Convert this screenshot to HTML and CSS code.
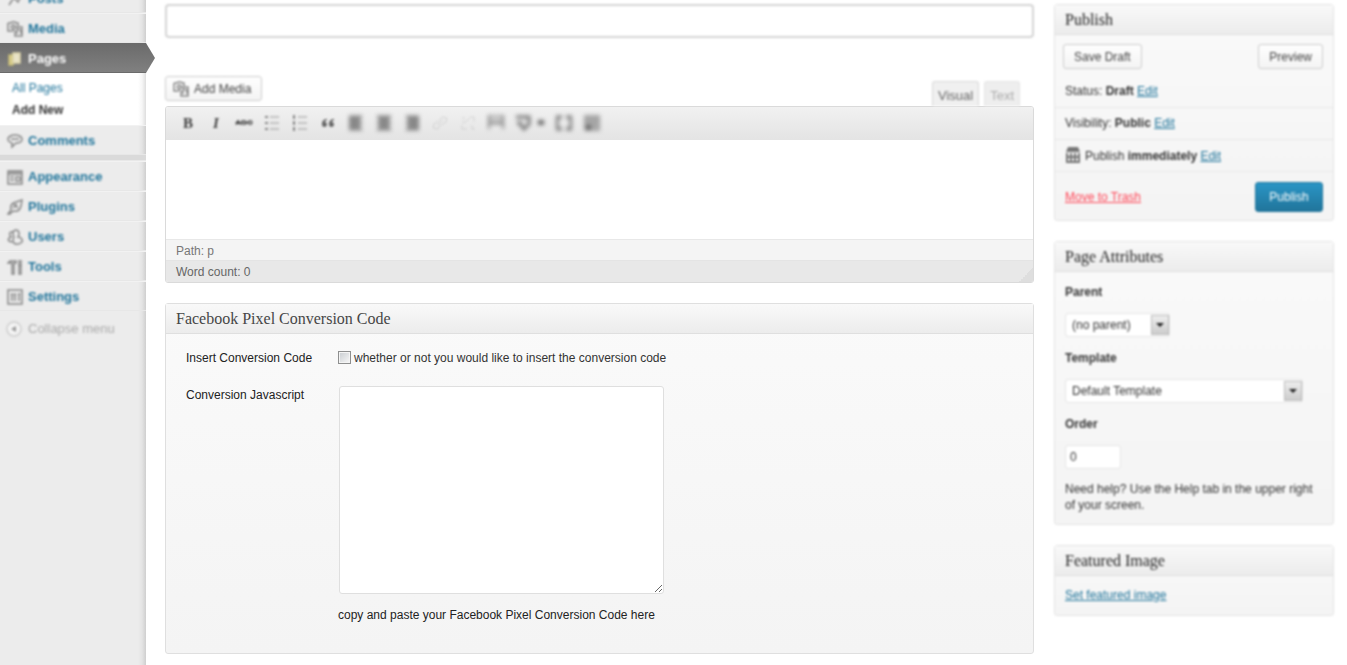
FILE: index.html
```html
<!DOCTYPE html>
<html lang="en">
<head>
<meta charset="utf-8">
<title>Add New Page</title>
<link rel="stylesheet" href="styles.css">
</head>
<body>
<div class="layout">
  <nav class="menu" aria-label="Main menu">
    <a class="item" href="#"><svg class="icon" viewBox="0 0 16 16"><path d="M10 1l5 5-2 1-2 4-6-6 4-2zM6 8l-4 6" /></svg><span>Posts</span></a>
    <a class="item" href="#"><svg class="icon" viewBox="0 0 16 16"><path d="M1 2h3l1-1h3l1 1h2v3M1 2v8h5M8 5a2 2 0 1 0-2 3M7 6h8v9H8v-5M7 6v4M10 13V8l4 1v4" /></svg><span>Media</span></a>
    <a class="item current" href="#"><svg class="icon" viewBox="0 0 16 16"><path class="page-back" d="M2 4h4v10H2z"/><path class="page-front" d="M6 2h7v10H6z"/></svg><span>Pages</span></a>
    <div class="submenu">
      <a href="#">All Pages</a>
      <a class="active" href="#">Add New</a>
    </div>
    <a class="item" href="#"><svg class="icon" viewBox="0 0 16 16"><path d="M8 2c4 0 7 2 7 4s-2 4-6 4l-4 4v-4C2 9 1 8 1 6c0-2 3-4 7-4zM4 6h8" /></svg><span>Comments</span></a>
    <div class="separator"></div>
    <a class="item" href="#"><svg class="icon" viewBox="0 0 16 16"><path d="M1 2h14v13H1zM1 5h14M3 8h4M3 11h4M9 8h4v4H9z"/><path d="M2 3h12" /></svg><span>Appearance</span></a>
    <a class="item" href="#"><svg class="icon" viewBox="0 0 16 16"><path d="M1 15l3-4c-1-4 1-7 5-8l6-2-1 6c-1 4-4 6-8 5l-3 3zM7 5l4 4M6 9l4-4" /></svg><span>Plugins</span></a>
    <a class="item" href="#"><svg class="icon" viewBox="0 0 16 16"><path d="M7 8c-2-3-1-7 2-7s4 4 2 7c3 0 5 3 4 5-3 3-7 3-9 0 0-3 0-4 1-5zM6 3C2 2 2 6 4 8c-3 1-3 3-2 4l3 1" /></svg><span>Users</span></a>
    <a class="item" href="#"><svg class="icon" viewBox="0 0 16 16"><path d="M1 4l2-2h6v2H7v11H5V4zM12 1v6M14 1v6M11 7h4M12 8v7h2V8" /></svg><span>Tools</span></a>
    <a class="item last" href="#"><svg class="icon" viewBox="0 0 16 16"><path d="M1 1h14v14H1zM5 4v8M8 4v8M12 4v8M4 6h2M7 6h2M11 5h2" /></svg><span>Settings</span></a>
    <button class="collapse" type="button"><svg class="icon" viewBox="0 0 16 16"><circle class="disc" cx="8" cy="8" r="7"/><path class="tri" d="M5 8l5-3v6z"/></svg><span>Collapse menu</span></button>
  </nav>

  <main class="content">
    <div class="primary">
      <input class="title soft" type="text" aria-label="Page title">
      <div class="editor-tools soft">
        <button class="btn media" type="button"><svg class="icon" viewBox="0 0 16 16"><path d="M1 2h3l1-1h3l1 1h2v3M1 2v8h5M8 5a2 2 0 1 0-2 3M7 6h8v9H8v-5M7 6v4M10 13V8l4 1v4" /></svg>Add Media</button>
        <div class="tabs">
          <button class="tab on" type="button">Visual</button>
          <button class="tab" type="button">Text</button>
        </div>
      </div>
      <section class="editor">
        <div class="toolbar">
          <button type="button" aria-label="Bold"><b>B</b></button>
          <button type="button" aria-label="Italic"><b><i>I</i></b></button>
          <button type="button" aria-label="Strikethrough"><s>ABC</s></button>
          <button type="button" aria-label="Bulleted list"><svg viewBox="0 0 16 16"><path class="thick" d="M1 2h3M1 8h3M1 14h3"/><path d="M6 2h9M6 8h9M6 14h9"/></svg></button>
          <button type="button" aria-label="Numbered list"><svg viewBox="0 0 16 16"><path class="thick" d="M2 0v4M2 6v4M2 12v4"/><path d="M6 2h9M6 8h9M6 14h9"/></svg></button>
          <button type="button" aria-label="Quote"><svg viewBox="0 0 16 16"><path class="fill" d="M7 4C4 4 2 6 2 9a2.500 2.500 0 1 0 3-2c0-1 1-2 2-2zM14 4c-3 0-5 2-5 5a2.500 2.500 0 1 0 3-2c0-1 1-2 2-2z"/></svg></button>
          <button class="haze" type="button" aria-label="Align left"><svg viewBox="0 0 16 16"><path class="bars" d="M1 2h13M1 5h11M1 8h13M1 11h11M1 14h13"/></svg></button>
          <button class="haze" type="button" aria-label="Align center"><svg viewBox="0 0 16 16"><path class="bars" d="M1 2h14M3 5h10M1 8h14M3 11h10M1 14h14"/></svg></button>
          <button class="haze" type="button" aria-label="Align right"><svg viewBox="0 0 16 16"><path class="bars" d="M2 2h13M4 5h11M2 8h13M4 11h11M2 14h13"/></svg></button>
          <button type="button" aria-label="Insert link" disabled><svg viewBox="0 0 16 16"><path d="M7 6l3-4 5 1-1 4-4 3M9 9l-3 5-5-1 1-4 4-3M5 10l6-5"/></svg></button>
          <button type="button" aria-label="Remove link" disabled><svg viewBox="0 0 16 16"><path d="M10 2h4v5M12 10v4h3M2 10v4h5M2 3h3M4 8l6-5M3 6v2"/></svg></button>
          <button class="haze" type="button" aria-label="Insert more tag"><svg viewBox="0 0 16 16"><path class="faint" d="M1 0h14v10H1z"/><path class="thick" d="M1 0v14M15 0v14M1 8h14"/><path d="M2 1h12"/></svg></button>
          <button class="wide haze" type="button" aria-label="Spell check"><svg viewBox="0 0 28 16"><path class="heavy" d="M0 2h13v6M1 8h5M4 9l4 5 6-6"/><path class="fill" d="M22 5h6v5h-6z"/></svg></button>
          <button class="haze" type="button" aria-label="Full screen"><svg viewBox="0 0 16 16"><path class="heavy" d="M6 2H1v4M10 2h5v4M6 14H1v-4M10 14h5v-4M1 6v4M15 6v4"/></svg></button>
          <button class="haze" type="button" aria-label="Show kitchen sink"><svg viewBox="0 0 16 16"><path class="shade" d="M0 0h16v16H0z"/><path d="M1 1h14v14H1zM1 5h14M1 9h14"/><path class="fill" d="M2 10h5v5H2z"/></svg></button>
        </div>
        <textarea class="canvas" aria-label="Page content"></textarea>
        <div class="path">Path: p</div>
        <div class="count">Word count: 0</div>
      </section>

      <section class="box">
        <h3>Facebook Pixel Conversion Code</h3>
        <div class="fields">
          <label for="insert">Insert Conversion Code</label>
          <div class="check"><input id="insert" type="checkbox"><label for="insert">whether or not you would like to insert the conversion code</label></div>
          <label class="js-label" for="js">Conversion Javascript</label>
          <div class="code"><textarea id="js"></textarea><p>copy and paste your Facebook Pixel Conversion Code here</p></div>
        </div>
      </section>
    </div>

    <aside class="side soft">
      <section class="box">
        <h3>Publish</h3>
        <div class="actions"><button class="btn" type="button">Save Draft</button><button class="btn" type="button">Preview</button></div>
        <div class="row">Status: <b>Draft</b> <a href="#">Edit</a></div>
        <div class="row">Visibility: <b>Public</b> <a href="#">Edit</a></div>
        <div class="row"><svg class="cal" viewBox="0 0 16 16"><path d="M3 0h10l2 5H1z"/><path class="cal-line" d="M2 6v9h12V6M6 6v8M10 6v8M2 10h12"/></svg>Publish <b>immediately</b> <a href="#">Edit</a></div>
        <div class="submit"><a class="trash" href="#">Move to Trash</a><button class="publish" type="button">Publish</button></div>
      </section>
      <section class="box">
        <h3>Page Attributes</h3>
        <div class="attrs">
          <label for="parent">Parent</label>
          <div class="pick small"><select id="parent"><option>(no parent)</option></select><span></span></div>
          <label for="template">Template</label>
          <div class="pick"><select id="template"><option>Default Template</option></select><span></span></div>
          <label for="order">Order</label>
          <input id="order" type="text" value="0">
          <p>Need help? Use the Help tab in the upper right of your screen.</p>
        </div>
      </section>
      <section class="box">
        <h3>Featured Image</h3>
        <div class="featured"><a href="#">Set featured image</a></div>
      </section>
    </aside>
  </main>
</div>
</body>
</html>
```
FILE: styles.css
```css
* { box-sizing: border-box; }
body { margin: 0; background: #fff; color: #333; font: 12px/16px "Liberation Sans", Arial, sans-serif; overflow: hidden; }
button, input, select, textarea { font: inherit; color: inherit; margin: 0; }
p { margin: 0; }
a { color: #21759b; }
.layout { display: flex; min-height: 100vh; }
.soft { filter: blur(1px); }

/* Left menu, scrolled so the first item is partly out of view */
.menu { flex: 0 0 146px; margin-top: -17px; background: linear-gradient(to right, #ececec 138px, #e4e4e4 142px, #cfcfcf 146px); font-size: 13px; }
.item { display: flex; align-items: center; height: 30px; padding: 2px 0 0 7px; gap: 5px; color: #21759b; font-weight: bold; text-decoration: none; border-top: 1px solid #f2f2f2; border-bottom: 1px solid #e7e7e7; }
.item span, .item svg, .submenu a, .collapse span, .collapse svg { filter: blur(1px); }
.icon { width: 16px; height: 16px; fill: none; stroke: #888; stroke-width: 1.500; }
.current { position: relative; color: #fff; background: linear-gradient(#6b6b6b, #808080); border-color: #6b6b6b #777; }
.current::after { content: ""; position: absolute; left: 100%; top: -1px; width: 9px; height: 30px; background: linear-gradient(#6b6b6b, #808080); clip-path: polygon(0 0, 100% 50%, 0 100%); }
.page-back { fill: #d8cd8a; stroke: #c5bb7a; }
.page-front { fill: #e9e3c8; stroke: #ddd5aa; }
.submenu { display: flex; flex-direction: column; gap: 6px; padding: 7px 12px 6px; height: 52px; font-size: 12px; background: linear-gradient(to right, #fff 138px, #f6f6f6 142px, #dedede 146px); }
.submenu a { text-decoration: none; }
.submenu .active { color: #333; font-weight: bold; }
.separator { height: 6px; background: #dadada; border-bottom: 1px solid #e8e8e8; }
.collapse { display: flex; align-items: center; gap: 6px; height: 36px; padding: 0 0 0 6px; border: 0; background: none; color: #aaa; }
.collapse .disc { fill: #f5f5f5; stroke: #ccc; }
.collapse .tri { fill: #999; stroke: none; }

.content { flex: 1; display: flex; align-items: flex-start; gap: 20px; padding: 4px 13px 11px 19px; min-width: 0; }
.primary { flex: 1; min-width: 0; }
.title { display: block; width: 100%; height: 34px; border: 2px solid #d4d4d4; border-radius: 4px; background: #fff; }
.editor-tools { display: flex; justify-content: space-between; align-items: flex-end; margin-top: 38px; height: 30px; padding-right: 14px; }
.btn { height: 25px; padding: 0 10px; border: 1px solid #ccc; border-radius: 3px; background: linear-gradient(#fefefe, #f4f4f4); color: #444; }
.media { display: flex; align-items: center; gap: 5px; padding: 0 10px 0 7px; align-self: flex-start; }
.tabs { display: flex; gap: 5px; }
.tab { height: 25px; padding: 3px 5px 0; font-size: 13px; border: 1px solid #e4e4e4; border-bottom: 0; border-radius: 3px 3px 0 0; background: #eee; color: #aaa; }
.tab.on { background: #f0f0f0; border-color: #d8d8d8; color: #666; }
.editor { border: 1px solid #dadada; border-radius: 3px; overflow: hidden; }
.toolbar { display: flex; align-items: center; gap: 12px; height: 33px; padding-left: 14px; background: linear-gradient(#f1f1f1, #e4e4e4); border-bottom: 1px solid #e4e4e4; color: #444; }
.toolbar button { display: flex; align-items: center; justify-content: center; width: 16px; height: 20px; padding: 0; border: 0; background: none; filter: blur(1px); }
.toolbar .haze { filter: blur(2px); }
.toolbar .wide { width: 28px; }
.toolbar b { font: bold 15px/20px "Liberation Serif", serif; }
.toolbar i { font-style: italic; }
.toolbar s { font-size: 8px; font-weight: bold; }
.toolbar svg { flex: none; width: 16px; height: 16px; fill: none; stroke: #999; stroke-width: 1; }
.toolbar .wide svg { width: 28px; }
.toolbar .thick { stroke: #888; stroke-width: 2; }
.toolbar .heavy { stroke: #777; stroke-width: 3; }
.toolbar .bars { stroke: #888; stroke-width: 3; }
.toolbar .fill { fill: #666; stroke: none; }
.toolbar .faint { fill: #ccc; stroke: none; }
.toolbar .shade { fill: #aaa; stroke: none; }
.toolbar button:disabled { opacity: 0.3; }
.canvas { display: block; width: 100%; height: 99px; padding: 10px; border: 0; resize: none; background: #fff; }
.path, .count { height: 21px; padding: 3px 10px 0; background: #f4f4f4; border-top: 1px solid #e8e8e8; color: #777; }
.count { height: 22px; background: linear-gradient(135deg, transparent 50%, #dedede 50%) right bottom / 14px 14px no-repeat, #e8e8e8; border-color: #e4e4e4; color: #666; }

.box { border: 1px solid #dfdfdf; border-radius: 3px; background: linear-gradient(#fafafa, #f4f4f4); }
.box h3 { margin: 0; height: 30px; padding: 0 10px; font: 16px/30px "Liberation Serif", Georgia, serif; color: #464646; background: linear-gradient(#f9f9f9, #ececec); border-bottom: 1px solid #dfdfdf; }
.primary .box { margin-top: 20px; }
.fields { display: grid; grid-template-columns: 132px 1fr; column-gap: 20px; row-gap: 19px; padding: 15px 20px 30px; color: #222; }
.fields > label { padding-top: 1px; }
.check { display: flex; align-items: center; gap: 3px; color: #333; }
.check input { appearance: none; width: 13px; height: 13px; border: 1px solid #8e8f8f; background: linear-gradient(135deg, #c8ccd0, #f8f8f8); box-shadow: inset 0 0 0 1px #f4f4f4; }
.js-label { line-height: 18px; }
.code { padding-top: 1px; }
.code textarea { display: block; width: 325px; max-width: 100%; height: 208px; margin: 0 0 13px 1px; border: 1px solid #dfdfdf; border-radius: 3px; background: #fff; }

.side { flex: 0 0 280px; display: flex; flex-direction: column; gap: 20px; }
.side h3 { color: #222; }
.side .box { border-color: #e3e3e3; }
.actions { display: flex; justify-content: space-between; padding: 9px 10px 7px 8px; }
.row { height: 32px; padding: 7px 10px 0; border-bottom: 1px solid #e8e8e8; }
.cal { width: 16px; height: 16px; margin-right: 4px; vertical-align: -3px; fill: #777; }
.cal-line { fill: none; stroke: #777; stroke-width: 2; }
.submit { display: flex; justify-content: space-between; align-items: center; padding: 10px 10px 8px; }
.trash { color: #f45; }
.publish { width: 68px; height: 30px; border: 1px solid #21759b; border-radius: 3px; background: linear-gradient(#2a95c5, #21759b); color: #fff; }
.attrs { display: flex; flex-direction: column; align-items: flex-start; padding: 12px 10px 11px; }
.attrs label { font-weight: bold; margin-bottom: 13px; }
.pick { position: relative; width: 238px; margin-bottom: 13px; }
.pick.small { width: 105px; }
.pick select, .attrs input { appearance: none; display: block; width: 100%; height: 24px; padding: 0 6px; border: 1px solid #e4e4e4; border-radius: 3px; background: #fff; }
.attrs input { width: 56px; padding: 0 4px; margin-bottom: 12px; }
.pick span { position: absolute; right: 1px; top: 2px; width: 18px; height: 20px; border: 1px solid #bbb; background: linear-gradient(#eee, #ccc); pointer-events: none; }
.pick span::after { content: ""; position: absolute; left: 4px; top: 7px; border: 4px solid transparent; border-top-color: #222; border-bottom: 0; }
.featured { padding: 11px 10px 12px; }
```
